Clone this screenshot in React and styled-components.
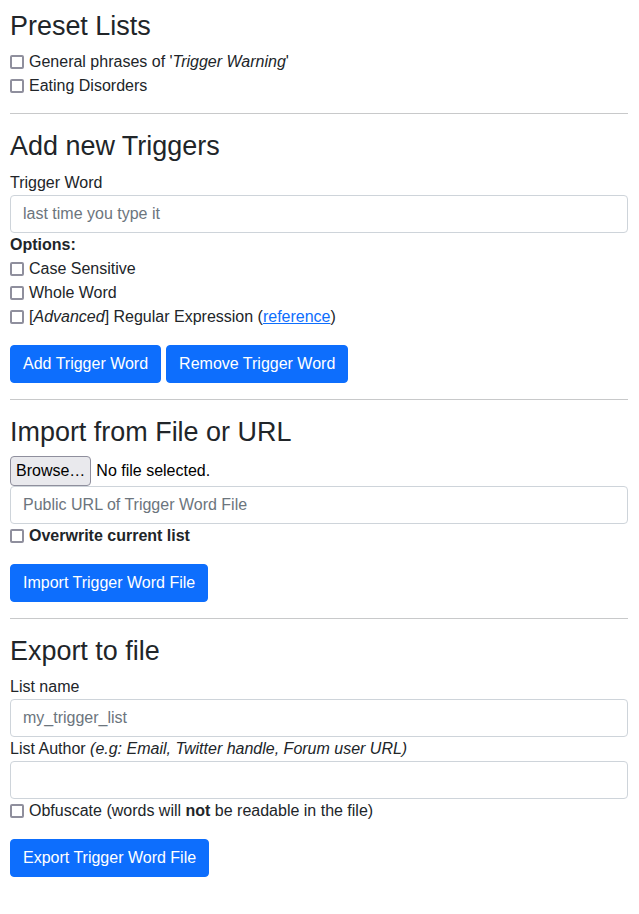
import styled, { createGlobalStyle } from "styled-components";

const GlobalStyle = createGlobalStyle`
  * { box-sizing: border-box; }
  body {
    margin: 0;
    font-family: "Liberation Sans", Arial, sans-serif;
    font-size: 16px;
    line-height: 1.5;
    color: #212529;
    background: #fff;
  }
`;

const Page = styled.div`
  padding: 10px 11px 20px 10px;
`;

const Title = styled.h2`
  margin: 0 0 8px;
  font-size: 26.95px;
  font-weight: 500;
  line-height: 1.2;
`;

const Rule = styled.hr`
  margin: ${(p) => (p.$first ? "15px" : "16px")} 0 16px;
  border: 0;
  border-top: 1px solid #c8c9ca;
  height: 0;
`;

const CheckRow = styled.label`
  display: flex;
  align-items: center;
  gap: 5px;
  height: 24px;
  font-weight: ${(p) => (p.$bold ? 700 : 400)};
`;

const Box = styled.span`
  flex: 0 0 auto;
  width: 14px;
  height: 14px;
  border: 2px solid #8f8f9d;
  border-radius: 2px;
  background: #fff;
`;

const Label = styled.div`
  display: block;
`;

const Input = styled.input`
  display: block;
  width: 100%;
  height: 38px;
  padding: 6px 12px;
  font: inherit;
  color: #212529;
  border: 1px solid #ced4da;
  border-radius: 4px;
  background: #fff;
  outline: none;

  &::placeholder {
    color: #6c757d;
  }
`;

const Buttons = styled.div`
  display: flex;
  gap: 5px;
  margin-top: 16px;
`;

const Button = styled.button`
  height: 38px;
  padding: 6px 12px;
  font: inherit;
  color: #fff;
  background: #0d6efd;
  border: 1px solid #0d6efd;
  border-radius: 4px;
`;

const FileRow = styled.div`
  display: flex;
  align-items: center;
  gap: 5px;
  height: 30px;
`;

const BrowseButton = styled.button`
  height: 30px;
  padding: 0 5px;
  font: inherit;
  color: #000;
  background: #e9e9ed;
  border: 1px solid #8f8f9d;
  border-radius: 4px;
`;

const FileText = styled.span`
  color: #000;
`;

const Link = styled.a`
  color: #0d6efd;
  text-decoration: underline;
`;

const Check = ({ children, bold }) => (
  <CheckRow $bold={bold}>
    <Box />
    <span>{children}</span>
  </CheckRow>
);

export default function App() {
  return (
    <Page>
      <GlobalStyle />
      <Title>Preset Lists</Title>
      <Check>
        General phrases of '<i>Trigger Warning</i>'
      </Check>
      <Check>Eating Disorders</Check>

      <Rule $first />

      <Title>Add new Triggers</Title>
      <Label>Trigger Word</Label>
      <Input placeholder="last time you type it" />
      <Label>
        <b>Options:</b>
      </Label>
      <Check>Case Sensitive</Check>
      <Check>Whole Word</Check>
      <Check>
        [<i>Advanced</i>] Regular Expression (<Link href="#">reference</Link>)
      </Check>
      <Buttons>
        <Button>Add Trigger Word</Button>
        <Button>Remove Trigger Word</Button>
      </Buttons>

      <Rule />

      <Title>Import from File or URL</Title>
      <FileRow>
        <BrowseButton>Browse…</BrowseButton>
        <FileText>No file selected.</FileText>
      </FileRow>
      <Input placeholder="Public URL of Trigger Word File" />
      <Check bold>Overwrite current list</Check>
      <Buttons>
        <Button>Import Trigger Word File</Button>
      </Buttons>

      <Rule />

      <Title>Export to file</Title>
      <Label>List name</Label>
      <Input placeholder="my_trigger_list" />
      <Label>
        List Author <i>(e.g: Email, Twitter handle, Forum user URL)</i>
      </Label>
      <Input />
      <Check>
        Obfuscate (words will <b>not</b> be readable in the file)
      </Check>
      <Buttons>
        <Button>Export Trigger Word File</Button>
      </Buttons>
    </Page>
  );
}
